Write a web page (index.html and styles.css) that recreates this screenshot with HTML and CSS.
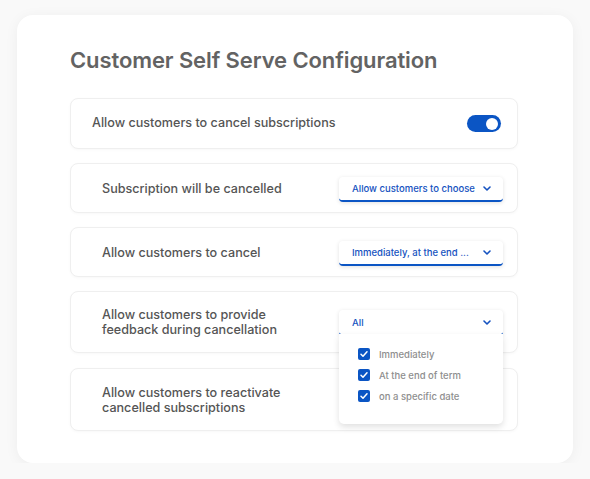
FILE: index.html
```html
<!DOCTYPE html>
<html lang="en">
<head>
<meta charset="UTF-8">
<meta name="viewport" content="width=device-width, initial-scale=1.0">
<title>Customer Self Serve Configuration</title>
<link rel="stylesheet" href="styles.css">
</head>
<body>
<div class="card">
  <h1>Customer Self Serve Configuration</h1>
  <div class="rows">
    <div class="row row-main">
      <span class="label">Allow customers to cancel subscriptions</span>
      <span class="toggle"><span class="knob"></span></span>
    </div>

    <div class="row">
      <span class="label">Subscription will be cancelled</span>
      <div class="select">
        <span>Allow customers to choose</span>
        <svg class="chev" viewBox="0 0 8 5" width="8" height="5"><path d="M1 1l3 3 3-3"/></svg>
      </div>
    </div>

    <div class="row">
      <span class="label">Allow customers to cancel</span>
      <div class="select">
        <span>Immediately, at the end ...</span>
        <svg class="chev" viewBox="0 0 8 5" width="8" height="5"><path d="M1 1l3 3 3-3"/></svg>
      </div>
    </div>

    <div class="row row-tall row-open">
      <span class="label">Allow customers to provide<br>feedback during cancellation</span>
      <div class="select select-open">
        <span>All</span>
        <svg class="chev" viewBox="0 0 8 5" width="8" height="5"><path d="M1 1l3 3 3-3"/></svg>
        <ul class="menu">
          <li><span class="check"><svg viewBox="0 0 12 12" width="12" height="12"><path d="M3 6.2l2 2 4-4.4"/></svg></span>Immediately</li>
          <li><span class="check"><svg viewBox="0 0 12 12" width="12" height="12"><path d="M3 6.2l2 2 4-4.4"/></svg></span>At the end of term</li>
          <li><span class="check"><svg viewBox="0 0 12 12" width="12" height="12"><path d="M3 6.2l2 2 4-4.4"/></svg></span>on a specific date</li>
        </ul>
      </div>
    </div>

    <div class="row row-tall row-last">
      <span class="label">Allow customers to reactivate<br>cancelled subscriptions</span>
    </div>
  </div>
</div>
</body>
</html>
```

FILE: styles.css
```css
* {
  box-sizing: border-box;
}

body {
  margin: 0;
  background-color: #f9f9f9;
  font-family: Inter, "Liberation Sans", sans-serif;
  color: #5c5c5c;
}

.card {
  width: 556px;
  height: 448px;
  margin: 15px 0 0 17px;
  padding: 30px 55px 0 53px;
  background-color: #fff;
  border-radius: 16px;
  box-shadow: 0 2px 14px rgba(0, 0, 0, 0.05);
}

h1 {
  margin: 0 0 23px;
  font-size: 22px;
  line-height: 30px;
  font-weight: 600;
  color: #636363;
  letter-spacing: -0.1px;
}

.rows {
  display: flex;
  flex-direction: column;
  gap: 14px;
}

.row {
  display: flex;
  align-items: center;
  justify-content: space-between;
  height: 50px;
  padding: 0 14px 0 31px;
  border: 1px solid #efefef;
  border-radius: 8px;
  background-color: #fff;
  box-shadow: 0 1px 3px rgba(0, 0, 0, 0.03);
}

.row-main {
  height: 51px;
  padding: 0 16px 0 21px;
}

.row-tall {
  height: 62px;
}

.row-last {
  height: 63px;
  margin-top: 1px;
}

.row-open {
  position: relative;
  z-index: 2;
}

.label {
  font-size: 12.6px;
  line-height: 15px;
  font-weight: 500;
  color: #555;
}

.row-main .label {
  margin-top: -2px;
}

/* toggle */
.toggle {
  display: flex;
  align-items: center;
  justify-content: flex-end;
  width: 34px;
  height: 17px;
  padding: 0 3px;
  border-radius: 9px;
  background-color: #0b55c4;
}

.knob {
  width: 12px;
  height: 12px;
  border-radius: 50%;
  background-color: #fff;
}

/* select */
.select {
  position: relative;
  display: flex;
  align-items: center;
  justify-content: space-between;
  width: 164px;
  height: 25px;
  margin-top: 2px;
  padding: 0 12px 0 13px;
  background-color: #fff;
  border-bottom: 2px solid #0b55c4;
  border-radius: 4px;
  box-shadow: 0 1px 4px rgba(0, 0, 0, 0.12);
  font-size: 9.5px;
  font-weight: 500;
  color: #1552c0;
}

.select-open {
  height: 26px;
}

.chev {
  fill: none;
  stroke: #1552c0;
  stroke-width: 1.6;
  stroke-linecap: round;
  stroke-linejoin: round;
}

.menu {
  position: absolute;
  top: 100%;
  left: 0;
  width: 164px;
  margin: 0;
  padding: 14px 0 22px 19px;
  list-style: none;
  background-color: #fff;
  border-radius: 0 0 5px 5px;
  box-shadow: 0 3px 6px rgba(0, 0, 0, 0.12);
  display: flex;
  flex-direction: column;
  gap: 9px;
}

.menu li {
  display: flex;
  align-items: center;
  gap: 9px;
  height: 12px;
  font-size: 9.5px;
  font-weight: 500;
  color: #8e8e8e;
}

.check {
  display: flex;
  width: 12px;
  height: 12px;
  border-radius: 2px;
  background-color: #0b55c4;
}

.check svg {
  fill: none;
  stroke: #fff;
  stroke-width: 1.5;
  stroke-linecap: round;
  stroke-linejoin: round;
}
```
